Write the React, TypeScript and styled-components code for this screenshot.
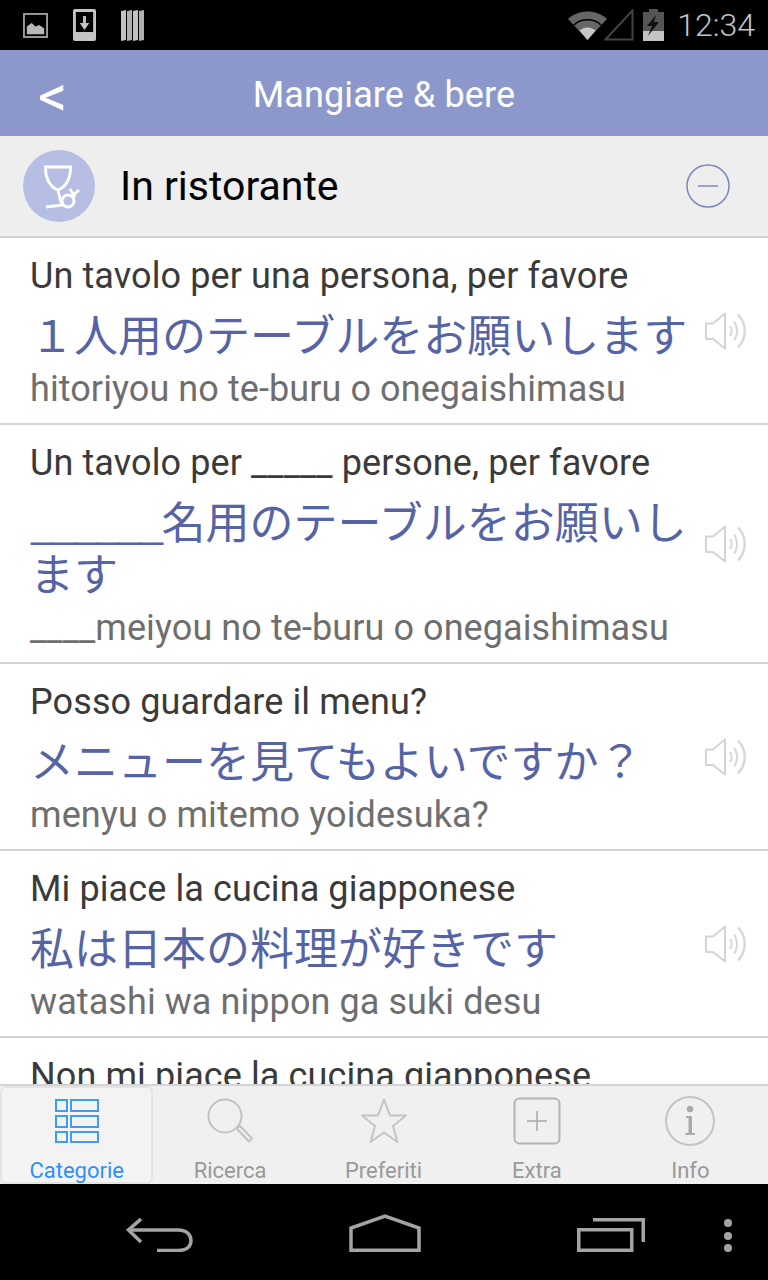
import { FC, ReactNode } from "react";
import styled, { createGlobalStyle } from "styled-components";

const GlobalStyle = createGlobalStyle`
  html, body {
    margin: 0;
    padding: 0;
    background: #000;
  }
  * {
    box-sizing: border-box;
  }
`;

type Phrase = { it: string; blank?: string; ja?: string; romaji?: string };

const phrases: Phrase[] = [
  {
    it: "Un tavolo per una persona, per favore",
    ja: "１人用のテーブルをお願いします",
    romaji: "hitoriyou no te-buru o onegaishimasu",
  },
  {
    it: "Un tavolo per _____ persone, per favore",
    blank: "______",
    ja: "名用のテーブルをお願いします",
    romaji: "____meiyou no te-buru o onegaishimasu",
  },
  {
    it: "Posso guardare il menu?",
    ja: "メニューを見てもよいですか？",
    romaji: "menyu o mitemo yoidesuka?",
  },
  {
    it: "Mi piace la cucina giapponese",
    ja: "私は日本の料理が好きです",
    romaji: "watashi wa nippon ga suki desu",
  },
  // only the first line shows above the tab bar
  { it: "Non mi piace la cucina giapponese" },
];

const SpeakerIcon: FC = () => (
  <svg width="42" height="38" viewBox="0 0 42 38" fill="none">
    <path d="M1 11.500H8L20 1.500V36.500L8 27H1Z" stroke="#d4d4d4" strokeWidth="2" strokeLinejoin="round" />
    <path d="M25 14C27 17 27 21 25 24" stroke="#d8d8d8" strokeWidth="2" />
    <path d="M29 9.500C33 15 33 23 29 28.500" stroke="#d8d8d8" strokeWidth="2" />
    <path d="M33 2.500C42 12 42 26 33 35.500" stroke="#d8d8d8" strokeWidth="2.500" />
  </svg>
);

const tabs: { label: string; active?: boolean; icon: ReactNode }[] = [
  {
    label: "Categorie",
    active: true,
    icon: (
      <svg width="44" height="44" viewBox="0 0 44 44" fill="none" stroke="#3f9bfa" strokeWidth="2">
        <rect x="1" y="1" width="11" height="11" />
        <rect x="16" y="1" width="27" height="11" />
        <rect x="1" y="17" width="11" height="11" />
        <rect x="16" y="17" width="27" height="11" />
        <rect x="1" y="33" width="11" height="10" />
        <rect x="16" y="33" width="27" height="10" />
      </svg>
    ),
  },
  {
    label: "Ricerca",
    icon: (
      <svg width="46" height="46" viewBox="0 0 46 46" fill="none">
        <circle cx="18" cy="18" r="16.500" stroke="#c2c2c2" strokeWidth="2" />
        <path d="M30 30L33 28L45 40.500L42 43.500L31 32Z" stroke="#c2c2c2" strokeWidth="2" strokeLinejoin="round" />
      </svg>
    ),
  },
  {
    label: "Preferiti",
    icon: (
      <svg width="48" height="46" viewBox="0 0 48 46" fill="none">
        <path
          d="M24 1.500L30 17.500H46L33 28L37.500 44L24 34.500L10.500 44L15 28L2 17.500H18Z"
          stroke="#c4c4c4"
          strokeWidth="2"
          strokeLinejoin="round"
        />
      </svg>
    ),
  },
  {
    label: "Extra",
    icon: (
      <svg width="48" height="48" viewBox="0 0 48 48" fill="none">
        <rect x="1.500" y="1.500" width="45" height="45" rx="5" stroke="#b4b4b4" strokeWidth="2" />
        <path d="M24 14V34M14 24H34" stroke="#a8a8a8" strokeWidth="1.500" />
      </svg>
    ),
  },
  {
    label: "Info",
    icon: (
      <svg width="50" height="50" viewBox="0 0 50 50" fill="none">
        <circle cx="25" cy="25" r="24" stroke="#c4c4c4" strokeWidth="2" />
        <circle cx="25" cy="13" r="3.200" fill="#aaa" />
        <path d="M21 20H27V37H30V39H20.500V37H23.500V22H21Z" fill="#aaa" />
      </svg>
    ),
  },
];

export default function App() {
  return (
    <Screen>
      <GlobalStyle />
      <StatusBar>
        <NotificationIcons>
          <svg width="25" height="25" viewBox="0 0 26 26" fill="none">
            <rect x="1" y="1" width="24" height="24" stroke="#9a9a9a" strokeWidth="2" />
            <path d="M4 22V14L9 10.500L13 14L17 12.500L22 16V22Z" fill="#b8b8b8" />
          </svg>
          <svg width="23" height="32" viewBox="0 0 24 32" preserveAspectRatio="none">
            <path
              fillRule="evenodd"
              d="M2 0H22Q24 0 24 2V30Q24 32 22 32H2Q0 32 0 30V2Q0 0 2 0ZM3 3V23H21V3Z"
              fill="#c4c4c4"
            />
            <path d="M10.500 7H13.500V14H17L12 21L7 14H10.500Z" fill="#c4c4c4" />
          </svg>
          <svg width="25" height="31" viewBox="0 0 25 31">
            <path d="M1 1L6 0V30L1 31Z" fill="#c2c2c2" />
            <path d="M7 1L12 0V30L7 31Z" fill="#b0b0b0" />
            <path d="M13 1L18 0V30L13 31Z" fill="#c2c2c2" />
            <path d="M19 1L24 0V30L19 31Z" fill="#b0b0b0" />
          </svg>
        </NotificationIcons>
        <SystemIcons>
          <svg width="39" height="29" viewBox="0 0 39 29">
            <path d="M0 8C10 -2 29 -2 39 8L19.500 29Z" fill="#666" />
            <path d="M6 14C13 7 26 7 33 14" fill="none" stroke="#000" strokeWidth="1.500" />
            <path d="M11.500 19.500C16 15.500 23 15.500 27.500 19.500L19.500 29Z" fill="#c8c8c8" />
          </svg>
          <SignalIcon width="30" height="32" viewBox="0 0 30 32" fill="none">
            <path d="M1.500 30.500L28.500 1.500V30.500Z" stroke="#444" strokeWidth="2" />
          </SignalIcon>
          <BatteryIcon width="21" height="32" viewBox="0 0 21 32">
            <rect x="6" y="0" width="9" height="3" fill="#555" />
            <rect x="0" y="3" width="21" height="19" fill="#555" />
            <rect x="0" y="22" width="21" height="10" fill="#c4c4c4" />
            <path d="M13 6L4 17H9L5 27L16 13H11Z" fill="#111" />
          </BatteryIcon>
          <Clock>12:34</Clock>
        </SystemIcons>
      </StatusBar>

      <Header>
        <BackButton>&lt;</BackButton>
        <HeaderTitle>Mangiare &amp; bere</HeaderTitle>
      </Header>

      <Content>
        <CategoryRow>
          <CategoryBadge>
            <svg width="36" height="46" viewBox="0 0 36 46" fill="none" stroke="#fff" strokeWidth="2.800">
              <path d="M1.500 2H26.500C27 13 22 22 14 25C6 22 1 13 1.500 2Z" />
              <path d="M14 25L17 38" />
              <path d="M2 42L19 40" />
              <circle cx="24" cy="36" r="6" />
              <path d="M28 31L35 25" />
              <path d="M26 24L31 32" />
            </svg>
          </CategoryBadge>
          <CategoryName>In ristorante</CategoryName>
          <svg width="44" height="44" viewBox="0 0 44 44" fill="none" stroke="#7c88c0" strokeWidth="1.500">
            <circle cx="22" cy="22" r="21" />
            <path d="M12 22H32" />
          </svg>
        </CategoryRow>

        {phrases.map((phrase) => (
          <PhraseRow key={phrase.it}>
            <PhraseText>
              <Italian>{phrase.it}</Italian>
              {phrase.ja && (
                <Japanese>
                  {phrase.blank && <Blank>{phrase.blank}</Blank>}
                  {phrase.ja}
                </Japanese>
              )}
              {phrase.romaji && <Romaji>{phrase.romaji}</Romaji>}
            </PhraseText>
            {phrase.ja && <SpeakerIcon />}
          </PhraseRow>
        ))}
      </Content>

      <TabBar>
        {tabs.map((tab) => (
          <Tab key={tab.label} $active={tab.active}>
            <TabIcon>{tab.icon}</TabIcon>
            <TabLabel $active={tab.active}>{tab.label}</TabLabel>
          </Tab>
        ))}
      </TabBar>

      <NavBar>
        <svg width="67" height="34" viewBox="0 0 67 34" fill="none" stroke="#a4a4a4" strokeWidth="3.500">
          <path d="M15 1L2.500 12L15 24" />
          <path d="M2.500 12H52C61 12 65 17 65 22.500C65 28 61 32.500 52 32.500H31" />
        </svg>
        <svg width="72" height="38" viewBox="0 0 72 38" fill="none" stroke="#a4a4a4" strokeWidth="3.500">
          <path d="M2 36.250V14L36 2L70 14V36.250Z" />
        </svg>
        <svg width="68" height="34" viewBox="0 0 68 34" fill="none" stroke="#a4a4a4" strokeWidth="3.500">
          <rect x="1.750" y="11.750" width="53" height="20.500" />
          <path d="M16 1.750H66.250V24" />
        </svg>
        <MenuDots>
          <span />
          <span />
          <span />
        </MenuDots>
      </NavBar>
    </Screen>
  );
}

const Screen = styled.div`
  width: 768px;
  height: 1280px;
  display: flex;
  flex-direction: column;
  overflow: hidden;
  background: #000;
  font-family: Roboto, "Noto Sans CJK JP", sans-serif;
`;

const StatusBar = styled.div`
  height: 50px;
  flex: none;
  display: flex;
  align-items: center;
  justify-content: space-between;
  padding: 0 13px 0 23px;
  background: #000;
`;

const NotificationIcons = styled.div`
  display: flex;
  align-items: center;
  gap: 24.500px;
`;

const SystemIcons = styled.div`
  display: flex;
  align-items: center;
`;

const SignalIcon = styled.svg`
  margin-left: -3px;
`;

const BatteryIcon = styled.svg`
  margin-left: 9px;
`;

const Clock = styled.span`
  margin-left: 13px;
  font-size: 32px;
  font-weight: 300;
  color: #c4c4c4;
`;

const Header = styled.div`
  position: relative;
  height: 86px;
  flex: none;
  display: flex;
  align-items: center;
  justify-content: center;
  padding-top: 4px;
  background: #8c98cc;
  color: #fff;
`;

const BackButton = styled.span`
  position: absolute;
  left: 38px;
  top: 20px;
  font-size: 58px;
  line-height: 52px;
`;

const HeaderTitle = styled.h1`
  margin: 0;
  font-size: 36px;
  font-weight: 400;
  letter-spacing: 0.100px;
`;

const Content = styled.div`
  flex: 1;
  min-height: 0;
  overflow: hidden;
  background: #fff;
`;

const CategoryRow = styled.div`
  height: 102px;
  display: flex;
  align-items: center;
  padding: 0 38px 0 23px;
  background: #eee;
  border-bottom: 2px solid #d0d0d0;
`;

const CategoryBadge = styled.div`
  width: 72px;
  height: 72px;
  flex: none;
  display: flex;
  align-items: center;
  justify-content: center;
  padding: 3px 0 0 6px;
  border-radius: 50%;
  background: #b6bee3;
`;

const CategoryName = styled.div`
  flex: 1;
  margin-left: 25px;
  font-size: 41px;
  color: #000;
`;

const PhraseRow = styled.div`
  display: flex;
  align-items: center;
  padding: 14px 21px 13px 30px;
  background: #fff;
  border-bottom: 2px solid #d4d4d4;
`;

const PhraseText = styled.div`
  width: 660px;
  flex: none;
  margin-right: 15px;
`;

const Italian = styled.div`
  font-size: 36px;
  line-height: 48px;
  letter-spacing: 0.100px;
  color: #3a3a3a;
`;

const Japanese = styled.div`
  margin: 7px 0 9px;
  font-family: "Noto Sans CJK JP", sans-serif;
  font-size: 44px;
  line-height: 52px;
  color: #5664a6;
  word-break: break-all;
`;

const Blank = styled.span`
  letter-spacing: -2.700px;
`;

const Romaji = styled.div`
  font-size: 36px;
  line-height: 42px;
  letter-spacing: 0.080px;
  color: #6e6e6e;
`;

const TabBar = styled.div`
  height: 100px;
  flex: none;
  display: flex;
  padding-right: 1px;
  background: #f0f0f0;
  border-top: 2px solid #d4d4d4;
`;

const Tab = styled.div<{ $active?: boolean }>`
  flex: 1;
  display: flex;
  flex-direction: column;
  align-items: center;
  border-radius: 6px;
  background: ${(p) => (p.$active ? "#f3f3f3" : "transparent")};
  box-shadow: ${(p) => (p.$active ? "inset 0 0 0 2px #e4e4e4" : "none")};
`;

const TabIcon = styled.div`
  height: 70px;
  display: flex;
  align-items: center;
  justify-content: center;
`;

const TabLabel = styled.span<{ $active?: boolean }>`
  margin-top: 2px;
  font-size: 22px;
  line-height: 26px;
  color: ${(p) => (p.$active ? "#2f8ff5" : "#999")};
`;

const NavBar = styled.div`
  height: 96px;
  flex: none;
  display: flex;
  align-items: flex-end;
  gap: 156px;
  padding: 0 0 28px 126px;
  background: #000;
`;

const MenuDots = styled.div`
  display: flex;
  flex-direction: column;
  gap: 4.500px;
  margin-left: -77px;

  span {
    display: block;
    width: 8px;
    height: 8px;
    border-radius: 50%;
    background: #a4a4a4;
  }
`;
